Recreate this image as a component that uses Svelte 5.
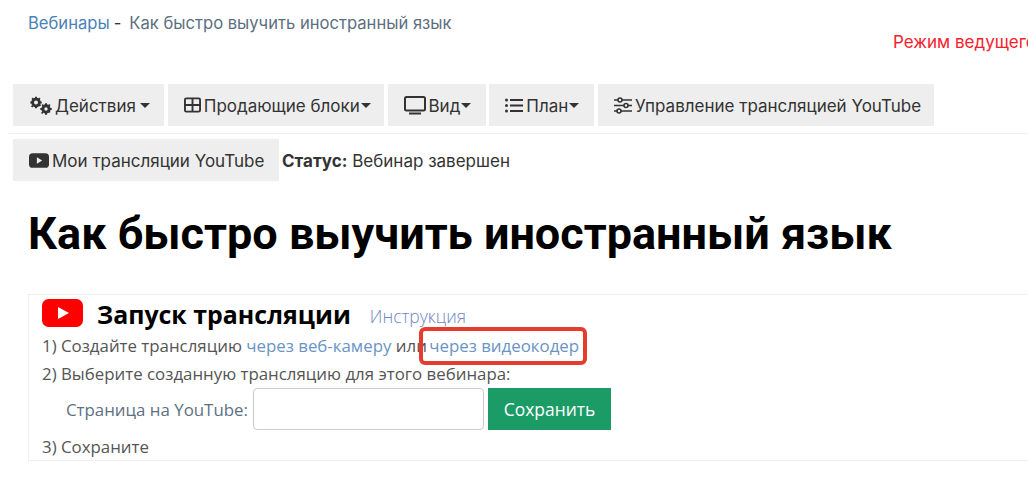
<script>
  const toolbar = [
    { label: "Действия", icon: "cogs", caret: true, space: true, width: 151 },
    { label: "Продающие блоки", icon: "table", caret: true, width: 216 },
    { label: "Вид", icon: "tv", caret: true, width: 98 },
    { label: "План", icon: "list", caret: true, width: 105 },
    { label: "Управление трансляцией YouTube", icon: "sliders", width: 336 }
  ];
</script>

{#snippet icon(name)}
  {#if name === "cogs"}
    <svg class="ico" width="23" height="19" viewBox="0 0 23 19" fill="#333">
      <circle cx="7" cy="6.500" r="3.400" fill="none" stroke="#333" stroke-width="2.800" />
      <path d="M6 .8h2v2H6zM6 10.200h2v2H6zM1.300 5.500h2v2h-2zM10.700 5.500h2v2h-2zM2.500 2.500l1.500-1 1 1.500-1.500 1zM9.500 9l1.500-1 1 1.500-1.500 1zM10 1.500l1.500 1-1 1.500-1.500-1zM3 9l1.500 1-1 1.500-1.500-1z" />
      <circle cx="17" cy="13" r="3.200" fill="none" stroke="#333" stroke-width="3" />
      <path d="M16 7.300h2v2h-2zM16 16.700h2v2h-2zM11.300 12h2v2h-2zM20.700 12h2v2h-2zM12.500 9l1.500-1 1 1.500-1.500 1zM19 15.500l1.500-1 1 1.500-1.500 1zM20 8l1.500 1-1 1.500-1.500-1zM13 15.500l1.500 1-1 1.500-1.500-1z" />
    </svg>
  {:else if name === "table"}
    <svg class="ico" width="17" height="16" viewBox="0 0 18 16" fill="none" stroke="#333" stroke-width="2">
      <rect x="1" y="1" width="16" height="14" rx="1.500" />
      <path d="M1 8h16M9 1v14" />
    </svg>
  {:else if name === "tv"}
    <svg class="ico" width="22" height="19" viewBox="0 0 22 19" fill="none" stroke="#333" stroke-width="2">
      <rect x="1" y="1" width="20" height="13.500" rx="1.500" />
      <path d="M5 17.500h12" />
    </svg>
  {:else if name === "list"}
    <svg class="ico" width="18" height="15" viewBox="0 0 18 15" fill="#333">
      <circle cx="1.500" cy="2" r="1.500" /><circle cx="1.500" cy="7.500" r="1.500" /><circle cx="1.500" cy="13" r="1.500" />
      <path d="M5 1h13v2H5zM5 6.500h13v2H5zM5 12h13v2H5z" />
    </svg>
  {:else if name === "sliders"}
    <svg class="ico" width="18" height="17" viewBox="0 0 18 17" fill="none" stroke="#333" stroke-width="1.600">
      <path d="M0 3h18M0 8.500h18M0 14h18" />
      <circle cx="6" cy="3" r="2" fill="#eee" /><circle cx="12" cy="8.500" r="2" fill="#eee" /><circle cx="5" cy="14" r="2" fill="#eee" />
    </svg>
  {/if}
{/snippet}

<div class="page">
  <div class="top">
    <div class="crumbs"><a href="#a" class="blue">Вебинары</a><span class="dash">-</span><span class="current">Как быстро выучить иностранный язык</span></div>
    <div class="mode">Режим ведущего</div>
  </div>

  <div class="toolbar">
    {#each toolbar as item}
      <button class="tool" style="width:{item.width}px">
        {@render icon(item.icon)}<span class="tool-text">{item.label}</span>{#if item.caret}<i class="caret" class:spaced={item.space}></i>{/if}
      </button>
    {/each}
  </div>

  <div class="status-row">
    <button class="tool mine">
      <svg class="ico" width="20" height="15" viewBox="0 0 19 14">
        <rect width="19" height="14" rx="3.500" fill="#333" />
        <path d="M7.500 4l5 3-5 3z" fill="#eee" />
      </svg><span class="tool-text">Мои трансляции YouTube</span>
    </button>
    <div class="status"><b>Статус:</b> Вебинар завершен</div>
  </div>

  <h1>Как быстро выучить иностранный язык</h1>

  <section class="panel">
    <div class="panel-head">
      <svg width="41" height="28" viewBox="0 0 41 28">
        <rect width="41" height="28" rx="6.500" fill="#f00" />
        <path d="M16 8l11 6-11 6z" fill="#fff" />
      </svg>
      <h2>Запуск трансляции</h2>
      <a href="#a" class="light">Инструкция</a>
    </div>
    <div class="line first">1) Создайте трансляцию <a href="#a">через веб-камеру</a> или <a href="#a" class="marked">через видеокодер</a></div>
    <div class="line">2) Выберите созданную трансляцию для этого вебинара:</div>
    <div class="form">
      <label for="yt">Страница на YouTube:</label>
      <input id="yt" type="text" />
      <button class="save">Сохранить</button>
    </div>
    <div class="line last">3) Сохраните</div>
  </section>
</div>

<style>
  :global(body) {
    margin: 0;
    background: #fff;
    overflow: hidden;
  }

  .page {
    width: 1028px;
    height: 482px;
    overflow: hidden;
    font-family: Inter, sans-serif;
    color: #333;
  }

  .top {
    height: 84px;
    padding-left: 28px;
    box-sizing: border-box;
  }

  .crumbs {
    padding-top: 13px;
    font-size: 16.600px;
    line-height: 20px;
  }

  .crumbs .blue {
    color: #4a82b8;
  }

  .dash {
    margin: 0 8px 0 4px;
  }

  .current {
    color: #5c6f80;
  }

  .mode {
    color: #f5222d;
    font-size: 17px;
    line-height: 18px;
    margin-left: 865px;
    white-space: nowrap;
  }

  .toolbar {
    display: flex;
    gap: 3.750px;
    margin-left: 9px;
    padding: 0 0 7px 4px;
    border-bottom: 1px solid #eee;
  }

  .tool {
    height: 42px;
    border: 0;
    padding: 0 0 0 16px;
    background: #eee;
    color: #333;
    font: 17px Inter, sans-serif;
    display: flex;
    align-items: center;
    white-space: nowrap;
  }

  .tool-text {
    position: relative;
    top: 1px;
  }

  .ico {
    flex: none;
    margin-right: 3px;
  }

  .caret {
    width: 0;
    height: 0;
    border: 5px solid transparent;
    border-top-color: #333;
    border-bottom: 0;
    margin-left: 1px;
  }

  .caret.spaced {
    margin-left: 4px;
  }

  .status-row {
    display: flex;
    align-items: center;
    gap: 3px;
    padding: 5px 0 0 13px;
  }

  .mine {
    width: 266px;
  }

  .status {
    font-size: 17px;
    padding-top: 2px;
    color: #333;
  }

  h1 {
    margin: 27px 0 34px 28px;
    font: 700 45px/52px Roboto, sans-serif;
    color: #000;
    white-space: nowrap;
  }

  .panel {
    margin-left: 28px;
    height: 167px;
    box-sizing: border-box;
    border: 1px solid #eee;
    border-right: 0;
    padding: 4px 0 0 13px;
    font-family: "Open Sans", sans-serif;
    font-size: 16.850px;
    color: #555;
  }

  .panel-head {
    display: flex;
    align-items: flex-start;
    height: 28px;
  }

  h2 {
    margin: 0 0 0 14px;
    font: 700 24.900px/31px "Open Sans", sans-serif;
    color: #000;
  }

  .panel-head .light {
    margin: 6px 0 0 19px;
    color: #6f86c4;
    font-weight: 300;
    font-size: 17.500px;
    line-height: 22px;
  }

  a {
    color: #6a94c4;
    text-decoration: none;
  }

  .line {
    line-height: 28px;
    white-space: nowrap;
  }

  .line.first {
    margin-top: 5px;
  }

  .marked {
    position: relative;
    margin-left: -2px;
  }

  .marked::after {
    content: "";
    position: absolute;
    left: -10px;
    right: -8px;
    top: -7px;
    bottom: -8px;
    border: 4px solid #e53c2e;
    border-radius: 6px;
  }

  .form {
    display: flex;
    align-items: center;
    height: 42px;
    padding-left: 24px;
  }

  label {
    color: #5d7083;
    width: 187px;
    flex: none;
  }

  input {
    width: 231px;
    height: 42px;
    box-sizing: border-box;
    border: 1px solid #ccc;
    border-radius: 4px;
    background: #fff;
    margin-right: 4px;
  }

  .save {
    width: 123px;
    height: 42px;
    background: #1b9c66;
    border: 0;
    color: #fff;
    font: 17.400px "Open Sans", sans-serif;
  }

  .line.last {
    margin-top: 3px;
  }
</style>
